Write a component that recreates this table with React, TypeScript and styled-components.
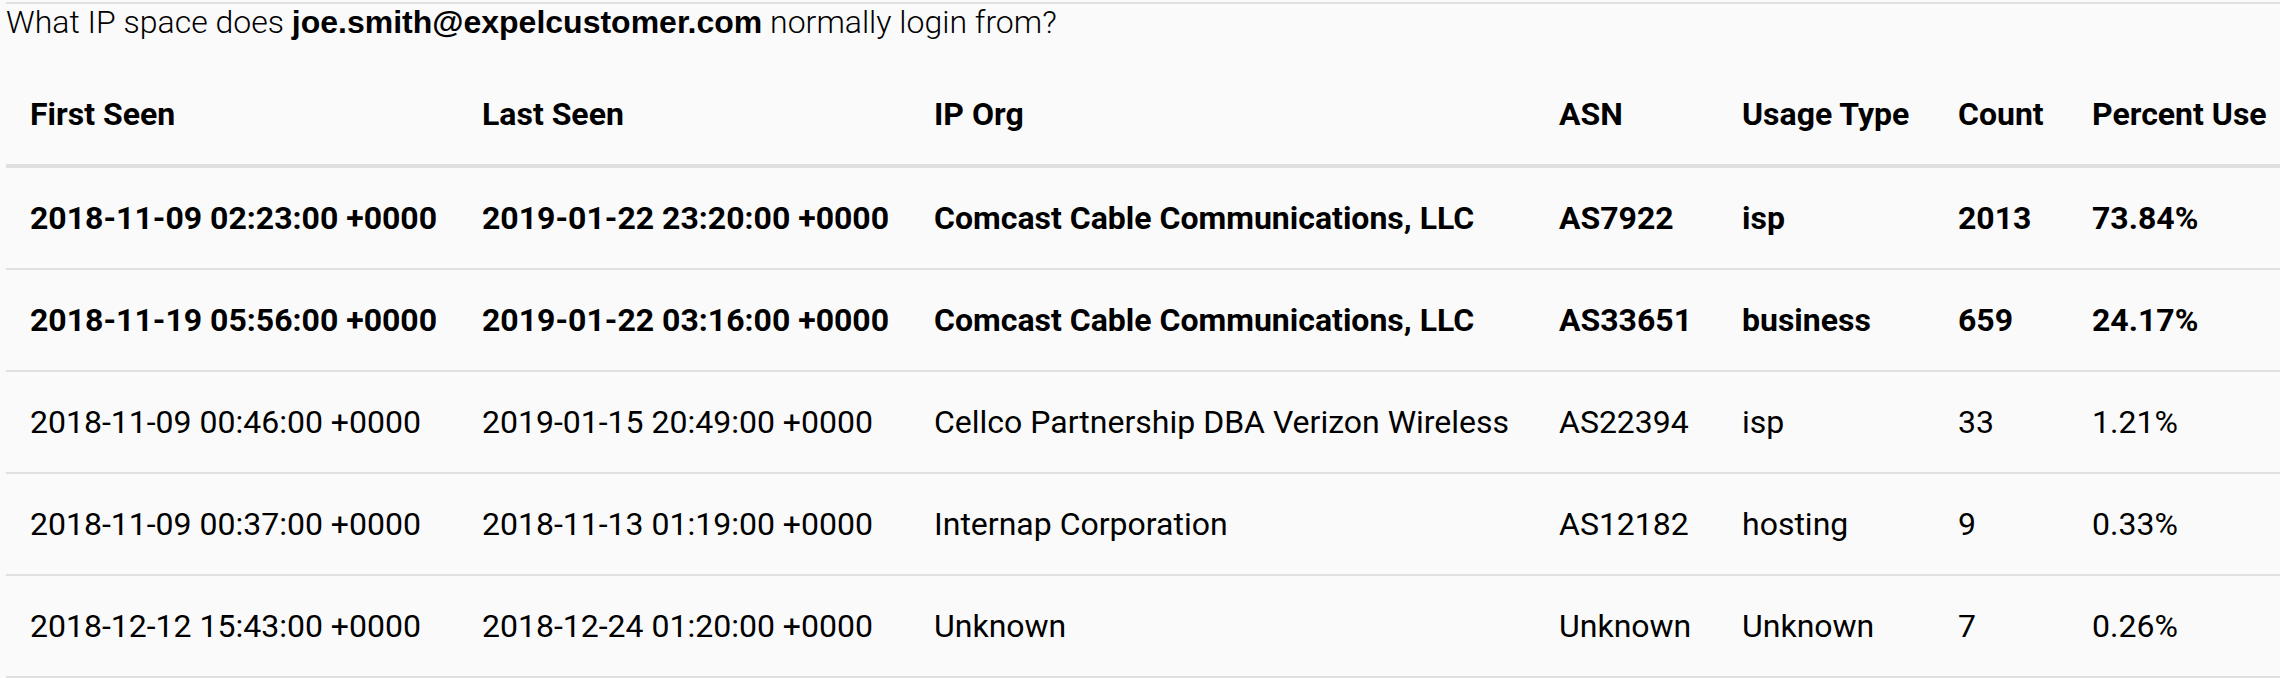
import React from "react";
import styled, { createGlobalStyle } from "styled-components";

const GlobalStyle = createGlobalStyle`
  html, body {
    margin: 0;
    padding: 0;
    background: #fafafa;
  }
  body {
    font-family: Roboto, "Noto Sans", "Liberation Sans", sans-serif;
    color: #000;
    overflow: hidden;
  }
`;

const Card = styled.section`
  margin: 2px 0 0 6px;
  border-top: 2px solid #e0e0e0;
  background: #fafafa;
`;

const Question = styled.p`
  margin: 0 0 24px 0;
  font-size: 32px;
  line-height: 36px;
  font-weight: 300;
  color: #000;
  white-space: nowrap;
`;

const Email = styled.strong`
  font-family: "Liberation Sans", Arial, sans-serif;
  font-weight: 700;
`;

const Table = styled.div`
  display: flex;
  flex-direction: column;
`;

const COLUMNS = "452px 452px 625px 183px 216px 134px 1fr";

const Row = styled.div<{ $header?: boolean; $strong?: boolean }>`
  display: grid;
  grid-template-columns: ${COLUMNS};
  border-bottom: ${(p) => (p.$header ? "4px" : "2px")} solid #e0e0e0;
  font-size: 32px;
  line-height: 36px;
  font-weight: ${(p) => (p.$header || p.$strong ? 700 : 400)};
`;

const Cell = styled.div`
  padding: 32px 0 32px 24px;
  white-space: nowrap;
`;

type Entry = {
  first: string;
  last: string;
  org: string;
  asn: string;
  usage: string;
  count: string;
  pct: string;
  strong?: boolean;
};

const headers = [
  "First Seen",
  "Last Seen",
  "IP Org",
  "ASN",
  "Usage Type",
  "Count",
  "Percent Use",
];

const rows: Entry[] = [
  {
    first: "2018-11-09 02:23:00 +0000",
    last: "2019-01-22 23:20:00 +0000",
    org: "Comcast Cable Communications, LLC",
    asn: "AS7922",
    usage: "isp",
    count: "2013",
    pct: "73.84%",
    strong: true,
  },
  {
    first: "2018-11-19 05:56:00 +0000",
    last: "2019-01-22 03:16:00 +0000",
    org: "Comcast Cable Communications, LLC",
    asn: "AS33651",
    usage: "business",
    count: "659",
    pct: "24.17%",
    strong: true,
  },
  {
    first: "2018-11-09 00:46:00 +0000",
    last: "2019-01-15 20:49:00 +0000",
    org: "Cellco Partnership DBA Verizon Wireless",
    asn: "AS22394",
    usage: "isp",
    count: "33",
    pct: "1.21%",
  },
  {
    first: "2018-11-09 00:37:00 +0000",
    last: "2018-11-13 01:19:00 +0000",
    org: "Internap Corporation",
    asn: "AS12182",
    usage: "hosting",
    count: "9",
    pct: "0.33%",
  },
  {
    first: "2018-12-12 15:43:00 +0000",
    last: "2018-12-24 01:20:00 +0000",
    org: "Unknown",
    asn: "Unknown",
    usage: "Unknown",
    count: "7",
    pct: "0.26%",
  },
];

export default function App() {
  return (
    <>
      <GlobalStyle />
      <Card>
        <Question>
          What IP space does <Email>joe.smith@expelcustomer.com</Email> normally
          login from?
        </Question>
        <Table>
          <Row $header>
            {headers.map((h) => (
              <Cell key={h}>{h}</Cell>
            ))}
          </Row>
          {rows.map((r, i) => (
            <Row key={i} $strong={r.strong}>
              <Cell>{r.first}</Cell>
              <Cell>{r.last}</Cell>
              <Cell>{r.org}</Cell>
              <Cell>{r.asn}</Cell>
              <Cell>{r.usage}</Cell>
              <Cell>{r.count}</Cell>
              <Cell>{r.pct}</Cell>
            </Row>
          ))}
        </Table>
      </Card>
    </>
  );
}
